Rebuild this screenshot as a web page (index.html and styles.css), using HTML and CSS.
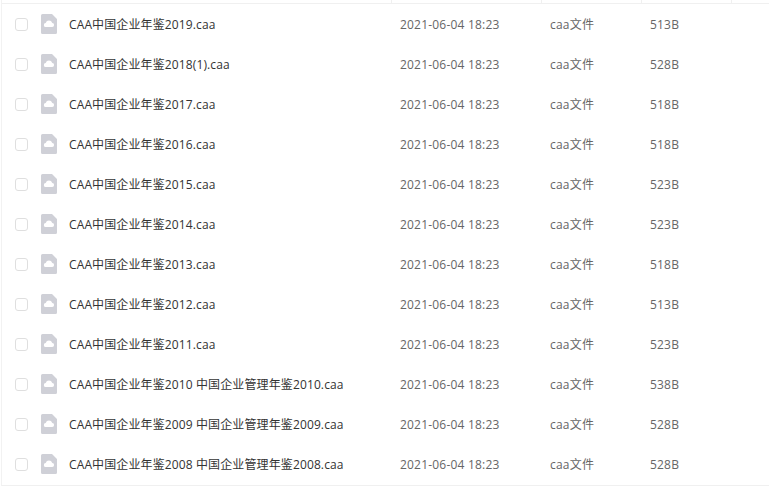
FILE: index.html
```html
<!DOCTYPE html>
<html lang="en">
<head>
  <meta charset="UTF-8">
  <title>CAA中国企业年鉴</title>
  <link rel="stylesheet" href="styles.css">
</head>
<body>
  <svg class="icon-defs" width="0" height="0">
    <symbol id="fileIcon" viewBox="0 0 16 20">
      <path d="M1.5 0H11L16 5V18.500A1.500 1.500 0 0 1 14.500 20H1.500A1.500 1.500 0 0 1 0 18.500V1.500A1.500 1.500 0 0 1 1.500 0Z" fill="#cfd0d7"/>
      <path d="M5 13A2 2 0 0 1 4.700 9A3.400 3.400 0 0 1 11.200 9A2 2 0 0 1 11 13Z" fill="#fff"/>
    </symbol>
  </svg>
  <div class="file-table">
    <div class="table-head">
      <span class="head-cell head-name"></span>
      <span class="head-cell head-date"></span>
      <span class="head-cell head-type"></span>
      <span class="head-cell head-size"></span>
      <span class="head-cell head-rest"></span>
    </div>
    <div class="file-row"><span class="check"></span><svg class="file-icon"><use href="#fileIcon"/></svg><span class="col-name">CAA中国企业年鉴2019.caa</span><span class="col-date">2021-06-04 18:23</span><span class="col-type">caa文件</span><span class="col-size">513B</span></div>
    <div class="file-row"><span class="check"></span><svg class="file-icon"><use href="#fileIcon"/></svg><span class="col-name">CAA中国企业年鉴2018(1).caa</span><span class="col-date">2021-06-04 18:23</span><span class="col-type">caa文件</span><span class="col-size">528B</span></div>
    <div class="file-row"><span class="check"></span><svg class="file-icon"><use href="#fileIcon"/></svg><span class="col-name">CAA中国企业年鉴2017.caa</span><span class="col-date">2021-06-04 18:23</span><span class="col-type">caa文件</span><span class="col-size">518B</span></div>
    <div class="file-row"><span class="check"></span><svg class="file-icon"><use href="#fileIcon"/></svg><span class="col-name">CAA中国企业年鉴2016.caa</span><span class="col-date">2021-06-04 18:23</span><span class="col-type">caa文件</span><span class="col-size">518B</span></div>
    <div class="file-row"><span class="check"></span><svg class="file-icon"><use href="#fileIcon"/></svg><span class="col-name">CAA中国企业年鉴2015.caa</span><span class="col-date">2021-06-04 18:23</span><span class="col-type">caa文件</span><span class="col-size">523B</span></div>
    <div class="file-row"><span class="check"></span><svg class="file-icon"><use href="#fileIcon"/></svg><span class="col-name">CAA中国企业年鉴2014.caa</span><span class="col-date">2021-06-04 18:23</span><span class="col-type">caa文件</span><span class="col-size">523B</span></div>
    <div class="file-row"><span class="check"></span><svg class="file-icon"><use href="#fileIcon"/></svg><span class="col-name">CAA中国企业年鉴2013.caa</span><span class="col-date">2021-06-04 18:23</span><span class="col-type">caa文件</span><span class="col-size">518B</span></div>
    <div class="file-row"><span class="check"></span><svg class="file-icon"><use href="#fileIcon"/></svg><span class="col-name">CAA中国企业年鉴2012.caa</span><span class="col-date">2021-06-04 18:23</span><span class="col-type">caa文件</span><span class="col-size">513B</span></div>
    <div class="file-row"><span class="check"></span><svg class="file-icon"><use href="#fileIcon"/></svg><span class="col-name">CAA中国企业年鉴2011.caa</span><span class="col-date">2021-06-04 18:23</span><span class="col-type">caa文件</span><span class="col-size">523B</span></div>
    <div class="file-row"><span class="check"></span><svg class="file-icon"><use href="#fileIcon"/></svg><span class="col-name">CAA中国企业年鉴2010 中国企业管理年鉴2010.caa</span><span class="col-date">2021-06-04 18:23</span><span class="col-type">caa文件</span><span class="col-size">538B</span></div>
    <div class="file-row"><span class="check"></span><svg class="file-icon"><use href="#fileIcon"/></svg><span class="col-name">CAA中国企业年鉴2009 中国企业管理年鉴2009.caa</span><span class="col-date">2021-06-04 18:23</span><span class="col-type">caa文件</span><span class="col-size">528B</span></div>
    <div class="file-row"><span class="check"></span><svg class="file-icon"><use href="#fileIcon"/></svg><span class="col-name">CAA中国企业年鉴2008 中国企业管理年鉴2008.caa</span><span class="col-date">2021-06-04 18:23</span><span class="col-type">caa文件</span><span class="col-size">528B</span></div>
  </div>
</body>
</html>
```

FILE: styles.css
```css
html, body {
  margin: 0;
  padding: 0;
  height: 487px;
  overflow: hidden;
  background-color: #fff;
}
body {
  font-family: "Open Sans", "Noto Sans CJK SC", sans-serif;
  font-size: 12px;
  color: #333;
}
.icon-defs {
  display: block;
}
.file-table {
  margin-left: 1px;
  border-left: 1px solid #f2f2f2;
  border-bottom: 1px solid #f0f0f0;
  width: 767px;
  height: 485px;
}
.table-head {
  display: flex;
  height: 3px;
  border-bottom: 1px solid #f0f0f0;
}
.head-cell {
  border-right: 1px solid #f0f0f0;
  box-sizing: border-box;
}
.head-name { width: 390px; }
.head-date { width: 150px; }
.head-type { width: 100px; }
.head-size { width: 90px; }
.head-rest { width: 37px; border-right: none; }
.file-row {
  display: flex;
  align-items: center;
  height: 40px;
}
.check {
  box-sizing: border-box;
  width: 13px;
  height: 13px;
  margin-left: 13px;
  border: 1px solid #dfdfdf;
  border-radius: 3px;
  background-color: #fff;
}
.file-icon {
  width: 16px;
  height: 20px;
  margin-left: 13px;
}
.col-name {
  width: 331px;
  margin-left: 12px;
  white-space: nowrap;
  letter-spacing: 0.12px;
}
.col-date { width: 150px; letter-spacing: 0.2px; color: #666; }
.col-type { width: 100px; letter-spacing: 0.2px; color: #666; }
.col-size { letter-spacing: 0.2px; color: #666; }
```
